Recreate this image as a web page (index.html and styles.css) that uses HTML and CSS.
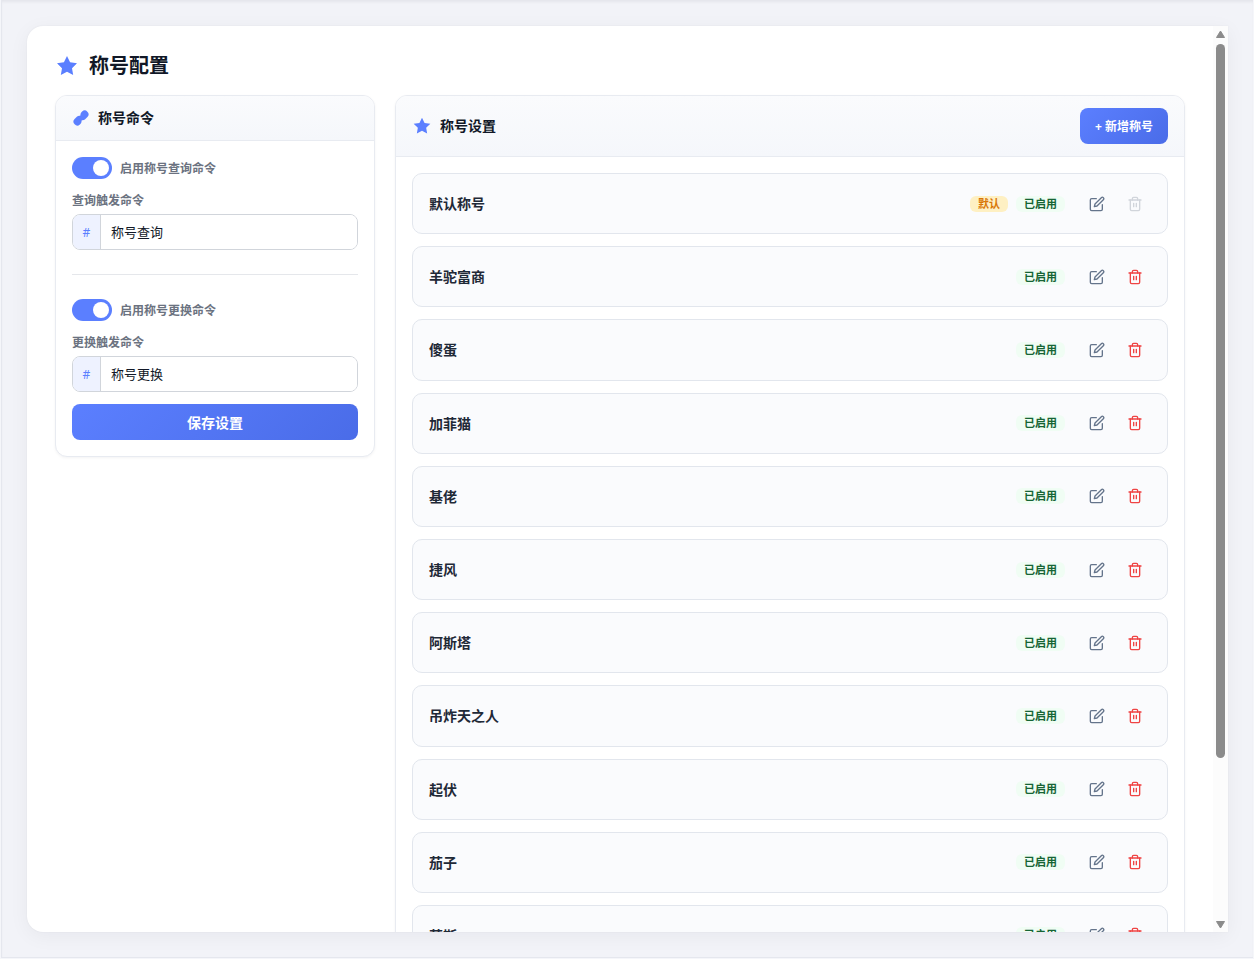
FILE: index.html
```html
<!DOCTYPE html>
<html lang="zh-CN">
<head>
  <meta charset="UTF-8">
  <meta name="viewport" content="width=device-width, initial-scale=1.0">
  <title>称号配置</title>
  <link rel="stylesheet" href="styles.css">
</head>
<body>
  <svg class="sprite" aria-hidden="true">
    <symbol id="icon-star" viewBox="0 0 24 24">
      <path fill="currentColor" d="M12 2l3.09 6.26L22 9.27l-5 4.87 1.18 6.88L12 17.77l-6.18 3.25L7 14.14 2 9.27l6.91-1.01L12 2z"/>
    </symbol>
    <symbol id="icon-link" viewBox="0 0 24 24">
      <g fill="currentColor">
        <path d="M10 13a5 5 0 0 0 7.54.54l3-3a5 5 0 0 0-7.07-7.07l-1.72 1.71"/>
        <path d="M14 11a5 5 0 0 0-7.54-.54l-3 3a5 5 0 0 0 7.07 7.07l1.71-1.71"/>
      </g>
    </symbol>
    <symbol id="icon-edit" viewBox="0 0 24 24">
      <g fill="none" stroke="currentColor" stroke-width="2" stroke-linecap="round" stroke-linejoin="round">
        <path d="M11 4H4a2 2 0 0 0-2 2v14a2 2 0 0 0 2 2h14a2 2 0 0 0 2-2v-7"/>
        <path d="M18.5 2.5a2.121 2.121 0 0 1 3 3L12 15l-4 1 1-4 9.5-9.5z"/>
      </g>
    </symbol>
    <symbol id="icon-trash" viewBox="0 0 24 24">
      <g fill="none" stroke="currentColor" stroke-width="2" stroke-linecap="round" stroke-linejoin="round">
        <path d="M3 6h18"/>
        <path d="M19 6v14a2 2 0 0 1-2 2H7a2 2 0 0 1-2-2V6m3 0V4a2 2 0 0 1 2-2h4a2 2 0 0 1 2 2v2"/>
        <path d="M10 11v5M14 11v5"/>
      </g>
    </symbol>
  </svg>

  <main class="page">
    <div class="window">
      <div class="content">
        <h1 class="page-title">
          <svg class="icon-lg"><use href="#icon-star"/></svg>
          称号配置
        </h1>

        <div class="layout">
          <section class="panel">
            <header class="panel-header">
              <h2 class="panel-title">
                <svg class="icon-sm"><use href="#icon-link"/></svg>
                称号命令
              </h2>
            </header>
            <form class="panel-body">
              <label class="switch-row">
                <input class="switch" type="checkbox" checked>
                启用称号查询命令
              </label>
              <label class="field-label" for="query-command">查询触发命令</label>
              <div class="input-group">
                <span class="prefix">#</span>
                <input class="input" id="query-command" type="text" value="称号查询">
              </div>

              <hr class="divider">

              <label class="switch-row">
                <input class="switch" type="checkbox" checked>
                启用称号更换命令
              </label>
              <label class="field-label" for="change-command">更换触发命令</label>
              <div class="input-group">
                <span class="prefix">#</span>
                <input class="input" id="change-command" type="text" value="称号更换">
              </div>
              <button class="btn btn-save" type="button">保存设置</button>
            </form>
          </section>

          <section class="panel">
            <header class="panel-header">
              <h2 class="panel-title">
                <svg class="icon-md"><use href="#icon-star"/></svg>
                称号设置
              </h2>
              <button class="btn btn-add" type="button">+ 新增称号</button>
            </header>
            <ul class="title-list" id="title-list"></ul>
          </section>
        </div>
      </div>

      <div class="scrollbar" aria-hidden="true">
        <svg class="scroll-arrow" viewBox="0 0 11 10"><path d="M5.500 1L9.500 7.500h-8z" stroke-width="1" stroke-linejoin="round"/></svg>
        <div class="scroll-track"><div class="scroll-thumb"></div></div>
        <svg class="scroll-arrow" viewBox="0 0 11 10"><path d="M5.500 9L9.500 2.500h-8z" stroke-width="1" stroke-linejoin="round"/></svg>
      </div>
    </div>
  </main>

  <script>
    const titles = ['默认称号', '羊驼富商', '傻蛋', '加菲猫', '基佬', '捷风', '阿斯塔', '吊炸天之人', '起伏', '茄子', '莫斯'];
    const list = document.getElementById('title-list');

    titles.forEach((name, index) => {
      const isDefault = index === 0;
      const item = document.createElement('li');
      item.className = 'title-item';
      item.innerHTML = `
        <span class="title-name">${name}</span>
        <div class="badges">
          ${isDefault ? '<span class="badge badge-default">默认</span>' : ''}
          <span class="badge badge-enabled">已启用</span>
        </div>
        <div class="actions">
          <button class="icon-btn" type="button" aria-label="编辑"><svg><use href="#icon-edit"/></svg></button>
          <button class="icon-btn icon-btn-delete" type="button" aria-label="删除" ${isDefault ? 'disabled' : ''}><svg><use href="#icon-trash"/></svg></button>
        </div>`;
      list.appendChild(item);
    });
  </script>
</body>
</html>
```

FILE: styles.css
```css
* {
  box-sizing: border-box;
}

body {
  margin: 0;
  background: #f5f6fa;
  color: #111827;
  font-family: "Noto Sans", "Noto Sans CJK SC", sans-serif;
  font-size: 13px;
}

button,
input {
  font-family: inherit;
}

h1,
h2,
ul {
  margin: 0;
  padding: 0;
}

.sprite {
  display: none;
}

.page {
  height: calc(100vh - 1px);
  margin: 0 1px;
  padding: 26px 25px 25px;
  background: #f2f3f8;
  border: 1px solid #e5e7ee;
  border-width: 0 0 1px 1px;
  box-shadow: inset 0 3px 3px -1px rgba(15, 23, 42, 0.06);
}

.window {
  display: flex;
  height: 100%;
  overflow: hidden;
  background: #fff;
  border-radius: 16px 0 0 16px;
  box-shadow: 0 4px 20px rgba(15, 23, 42, 0.05), 0 0 2px rgba(15, 23, 42, 0.06);
}

.content {
  flex: 1;
  min-width: 0;
  padding: 26px 28px 0;
  overflow: hidden;
}

.page-title {
  display: flex;
  align-items: center;
  gap: 10px;
  margin-bottom: 16px;
  font-size: 20px;
  line-height: 27px;
}

.page-title svg,
.panel-title svg {
  flex: none;
  color: #5b7fff;
}

.icon-lg {
  width: 24px;
  height: 24px;
}

.icon-md {
  width: 20px;
  height: 20px;
}

.icon-sm {
  width: 18px;
  height: 18px;
}

.layout {
  display: grid;
  grid-template-columns: 320px 1fr;
  align-items: start;
  gap: 20px;
}

.panel {
  overflow: hidden;
  background: #fff;
  border: 1px solid #e8ebf1;
  border-radius: 12px;
  box-shadow: 0 1px 3px rgba(15, 23, 42, 0.05);
}

.panel-header {
  display: flex;
  align-items: center;
  justify-content: space-between;
  padding: 12px 16px;
  background: linear-gradient(180deg, #fafbfd, #f5f7fb);
  border-bottom: 1px solid #e8ebf1;
}

.panel-title {
  display: flex;
  align-items: center;
  gap: 8px;
  font-size: 14px;
  line-height: 20px;
}

.panel-body {
  display: flex;
  flex-direction: column;
  padding: 16px;
}

.switch-row {
  display: flex;
  align-items: center;
  gap: 8px;
  height: 22px;
  margin-bottom: 12px;
  color: #6b7280;
  font-size: 12px;
  font-weight: 700;
}

.switch {
  display: flex;
  align-items: center;
  justify-content: flex-start;
  width: 40px;
  height: 22px;
  margin: 0;
  padding: 3px;
  appearance: none;
  background: #cbd5e1;
  border-radius: 11px;
}

.switch::before {
  width: 16px;
  height: 16px;
  background: #fff;
  border-radius: 50%;
  content: "";
}

.switch:checked {
  justify-content: flex-end;
  background: #5b7fff;
}

.field-label {
  margin-bottom: 4px;
  color: #6b7280;
  font-size: 12px;
  font-weight: 700;
  line-height: 19px;
}

.input-group {
  display: flex;
  height: 36px;
  overflow: hidden;
  border: 1px solid #d1d5db;
  border-radius: 8px;
}

.prefix {
  display: flex;
  align-items: center;
  justify-content: center;
  width: 28px;
  background: #eef2ff;
  border-right: 1px solid #d1d5db;
  color: #5b7fff;
  font-size: 12px;
}

.input {
  flex: 1;
  min-width: 0;
  padding: 0 10px 2px;
  background: #fff;
  border: 0;
  outline: none;
  color: #111827;
  font-size: 13px;
}

.divider {
  width: 100%;
  height: 1px;
  margin: 24px 0;
  background: #e5e7eb;
  border: 0;
}

.btn {
  height: 36px;
  padding: 0 15px;
  background: linear-gradient(135deg, #5b7fff, #4a6ce8);
  border: 0;
  border-radius: 8px;
  color: #fff;
  font-weight: 700;
  cursor: pointer;
}

.btn-save {
  margin-top: 12px;
  font-size: 14px;
}

.btn-add {
  font-size: 12px;
}

.title-list {
  display: flex;
  flex-direction: column;
  gap: 12px;
  padding: 16px;
  list-style: none;
}

.title-item {
  display: flex;
  align-items: center;
  padding: 17px 16px;
  background: #fafbfd;
  border: 1px solid #e2e6ed;
  border-radius: 10px;
}

.title-name {
  flex: 1;
  color: #1f2937;
  font-size: 14px;
  font-weight: 700;
  line-height: 1.8;
}

.badges {
  display: flex;
  gap: 8px;
  margin-right: 16px;
}

.badge {
  padding: 0 8px;
  border-radius: 6px;
  font-size: 11px;
  font-weight: 700;
  line-height: 16px;
}

.badge-default {
  background: #fef0c3;
  color: #d97706;
}

.badge-enabled {
  background: #f0fdf4;
  color: #166534;
}

.actions {
  display: flex;
  gap: 6px;
}

.icon-btn {
  display: flex;
  align-items: center;
  justify-content: center;
  width: 32px;
  height: 24px;
  padding: 0;
  background: none;
  border: 0;
  color: #64748b;
  cursor: pointer;
}

.icon-btn svg {
  width: 16px;
  height: 16px;
}

.icon-btn-delete {
  color: #ef4444;
}

.icon-btn:disabled {
  color: #d1d5db;
  cursor: not-allowed;
}

.scrollbar {
  display: flex;
  flex: none;
  flex-direction: column;
  align-items: center;
  width: 15px;
  padding: 4px 0 3px;
  background: #fcfcfc;
}

.scroll-arrow {
  width: 11px;
  height: 10px;
  fill: #8b8b8b;
  stroke: #8b8b8b;
}

.scroll-track {
  flex: 1;
  width: 9px;
  padding: 4px 0;
}

.scroll-thumb {
  height: 82%;
  background: #8b8b8b;
  border-radius: 5px;
}
```
